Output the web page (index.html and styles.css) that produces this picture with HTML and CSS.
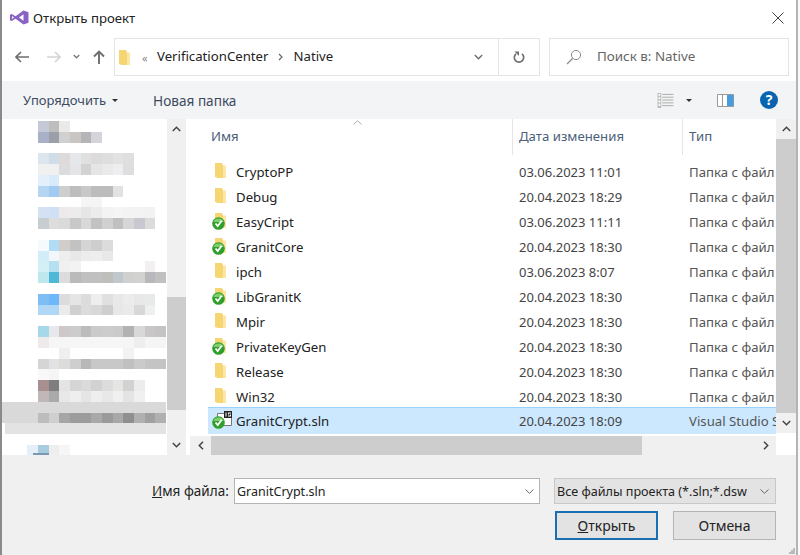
FILE: index.html
```html
<!DOCTYPE html>
<html lang="ru">
<head>
<meta charset="utf-8">
<title>Открыть проект</title>
<link rel="stylesheet" href="styles.css">
</head>
<body>
<div class="window">
  <header class="titlebar">
    <svg class="app-icon" width="19" height="15" viewBox="0 0 19 19" preserveAspectRatio="none"><path fill="#8a62c4" d="M13.5 0.5 18.5 2.7V16.3L13.5 18.5 5.5 11 1.8 14 0 13V6L1.8 5 5.5 8ZM13.5 5.5 9 9.5 13.5 13.5ZM2 7.5V11.5L4 9.5Z"/></svg>
    <span class="title">Открыть проект</span>
    <svg class="close" width="12" height="12" viewBox="0 0 12 12"><path d="M.5.5l11 11M11.5.5l-11 11" stroke="#444" fill="none"/></svg>
  </header>
  <nav class="navbar">
    <div class="nav-buttons">
      <svg width="15" height="12" viewBox="0 0 15 12"><path d="M1 6h13M6 1 1 6l5 5" fill="none" stroke="#6e6e6e" stroke-width="1.6"/></svg>
      <svg class="fwd" width="15" height="12" viewBox="0 0 15 12"><path d="M1 6h13M9 1l5 5-5 5" fill="none" stroke="#d4d4d4" stroke-width="1.6"/></svg>
      <svg class="drop" width="7" height="5" viewBox="0 0 7 5"><path d="M.7 1 3.5 3.8 6.3 1" fill="none" stroke="#7a7a7a" stroke-width="1.3"/></svg>
      <svg class="up" width="12" height="14" viewBox="0 0 12 14"><path d="M6 14V1.5M1 6.5l5-5 5 5" fill="none" stroke="#6e6e6e" stroke-width="1.9"/></svg>
    </div>
    <div class="address">
      <svg class="crumb-folder" width="11" height="15" viewBox="0 0 11 15"><path fill="#f5d673" d="M0 0h7l1 2v13H3l-3-1z"/><path fill="#fbe6a3" d="M8 2.500h3V15H8z"/></svg>
      <span class="chev-more">«</span>
      <span class="crumb">VerificationCenter</span>
      <svg class="crumb-sep" width="5" height="8" viewBox="0 0 5 8"><path d="M1 1l3 3-3 3" fill="none" stroke="#666" stroke-width="1.200"/></svg>
      <span class="crumb">Native</span>
      <svg class="addr-drop" width="9" height="6" viewBox="0 0 9 6"><path d="M.8 1 4.500 4.700 8.200 1" fill="none" stroke="#6e6e6e" stroke-width="1.500"/></svg>
      <div class="refresh">
        <svg width="12" height="13" viewBox="0 0 12 13"><path d="M3 2.800A4.700 4.700 0 1 0 9 2.800" fill="none" stroke="#707070" stroke-width="1.700"/><path fill="#707070" d="M1.500 .5H6V5z"/></svg>
      </div>
    </div>
    <div class="search">
      <svg width="16" height="16" viewBox="0 0 16 16"><circle cx="10" cy="6" r="4.600" fill="none" stroke="#8a8a8a"/><path d="M6.500 9.500 1 15" stroke="#8a8a8a" stroke-width="1.200"/></svg>
      <span>Поиск в: Native</span>
    </div>
  </nav>
  <div class="toolbar">
    <span class="tool">Упорядочить</span>
    <i class="caret"></i>
    <span class="tool new-folder">Новая папка</span>
    <svg class="view-icon" width="17" height="15" viewBox="0 0 17 16"><path fill="#bdbdbd" d="M0 0h4v16H0z"/><path fill="#fff" d="M1 1h2v2H1zM1 4.500h2v2H1zM1 8h2v2H1zM1 11.500h2v2H1z"/><path stroke="#a9a9a9" d="M5 1.500h12M5 4.500h12M5 7.500h12M5 10.500h12M5 13.500h12"/></svg>
    <i class="caret view-caret"></i>
    <svg class="pane-icon" width="17" height="13" viewBox="0 0 17 13"><path fill="#fff" stroke="#9a9a9a" d="M.5.500h16v12H.5z"/><path fill="#4a9ade" d="M10 1h6.500v11H10z"/><path stroke="#9a9a9a" d="M5.500 1v11"/></svg>
    <span class="help">?</span>
  </div>
  <div class="main">
    <aside class="tree">
      <svg class="mosaic" width="164" height="336" viewBox="0 0 164 336" shape-rendering="crispEdges">
        <g transform="translate(36 2) scale(10.667 10.8)">
          <rect x="0" y="0" width="1" height="1" fill="#c5c8d6"/><rect x="1" y="0" width="1" height="1" fill="#bdbdbd"/><rect x="2" y="0" width="1" height="1" fill="#eaeaea"/>
          <rect x="0" y="1" width="1" height="1" fill="#aab0c8"/><rect x="1" y="1" width="1" height="1" fill="#9b9fa8"/><rect x="2" y="1" width="1" height="1" fill="#d0d0d0"/><rect x="3" y="1" width="1" height="1" fill="#c8c5c3"/><rect x="4" y="1" width="1" height="1" fill="#b5b5b7"/><rect x="5" y="1" width="1" height="1" fill="#d3d5da"/>
          <rect x="0" y="3" width="1" height="1" fill="#dde6ee"/><rect x="1" y="3" width="1" height="1" fill="#cfdde9"/><rect x="2" y="3" width="1" height="1" fill="#dedad9"/><rect x="3" y="3" width="1" height="1" fill="#e5e8ea"/><rect x="4" y="3" width="1" height="1" fill="#e0e0e0"/><rect x="5" y="3" width="1" height="1" fill="#dcdada"/><rect x="6" y="3" width="1" height="1" fill="#dedede"/><rect x="7" y="3" width="1" height="1" fill="#e2e2e2"/><rect x="8" y="3" width="1" height="1" fill="#dfdfdf"/>
          <rect x="0" y="4" width="1" height="1" fill="#f0f0f0"/><rect x="1" y="4" width="1" height="1" fill="#f0f0f0"/><rect x="2" y="4" width="1" height="1" fill="#dcdcdc"/><rect x="3" y="4" width="1" height="1" fill="#e5e5e8"/><rect x="4" y="4" width="1" height="1" fill="#d2d2d2"/><rect x="5" y="4" width="1" height="1" fill="#e5e5e5"/><rect x="6" y="4" width="1" height="1" fill="#eaeaea"/><rect x="7" y="4" width="1" height="1" fill="#eeeef0"/><rect x="8" y="4" width="1" height="1" fill="#dedede"/>
          <rect x="0" y="5" width="1" height="1" fill="#e3f0fb"/><rect x="1" y="5" width="1" height="1" fill="#d9ebfb"/>
          <rect x="0" y="6" width="1" height="1" fill="#b5d6f3"/><rect x="1" y="6" width="1" height="1" fill="#a0ccf3"/><rect x="2" y="6" width="1" height="1" fill="#cecece"/><rect x="3" y="6" width="1" height="1" fill="#bdbdbd"/><rect x="4" y="6" width="1" height="1" fill="#c8c8c8"/><rect x="5" y="6" width="1" height="1" fill="#bcbcbc"/><rect x="6" y="6" width="1" height="1" fill="#bcbcbc"/><rect x="7" y="6" width="1" height="1" fill="#e2e2e2"/>
          <rect x="4" y="7" width="1" height="1" fill="#f5f5f5"/><rect x="5" y="7" width="1" height="1" fill="#f5f5f5"/>
          <rect x="0" y="8" width="1" height="1" fill="#d3e1f3"/><rect x="1" y="8" width="1" height="1" fill="#cfdff5"/><rect x="2" y="8" width="1" height="1" fill="#eeeaea"/><rect x="3" y="8" width="1" height="1" fill="#ececec"/><rect x="4" y="8" width="1" height="1" fill="#e6e6e6"/><rect x="5" y="8" width="1" height="1" fill="#ececee"/><rect x="6" y="8" width="1" height="1" fill="#f3f3f3"/><rect x="7" y="8" width="1" height="1" fill="#f5f5f5"/><rect x="8" y="8" width="1" height="1" fill="#f3f3f3"/><rect x="9" y="8" width="1" height="1" fill="#f3f3f3"/><rect x="10" y="8" width="1" height="1" fill="#f2f2f2"/>
          <rect x="0" y="9" width="1" height="1" fill="#c8cdcf"/><rect x="1" y="9" width="1" height="1" fill="#dddddd"/><rect x="2" y="9" width="1" height="1" fill="#dadada"/><rect x="3" y="9" width="1" height="1" fill="#c8c8c8"/><rect x="4" y="9" width="1" height="1" fill="#d8d8d8"/><rect x="5" y="9" width="1" height="1" fill="#c0c2c4"/><rect x="6" y="9" width="1" height="1" fill="#d0d0d0"/><rect x="7" y="9" width="1" height="1" fill="#c0c0c0"/><rect x="8" y="9" width="1" height="1" fill="#d6d6d6"/><rect x="9" y="9" width="1" height="1" fill="#c8c8d0"/><rect x="10" y="9" width="1" height="1" fill="#dcdcdc"/>
          <rect x="0" y="11" width="1" height="1" fill="#f5fafd"/><rect x="1" y="11" width="1" height="1" fill="#b2dcf5"/><rect x="2" y="11" width="1" height="1" fill="#d0cdcb"/><rect x="3" y="11" width="1" height="1" fill="#c2c2c2"/><rect x="4" y="11" width="1" height="1" fill="#d5d5d5"/><rect x="5" y="11" width="1" height="1" fill="#cecece"/><rect x="6" y="11" width="1" height="1" fill="#dcdcdc"/>
          <rect x="0" y="12" width="1" height="1" fill="#d3ecf9"/><rect x="1" y="12" width="1" height="1" fill="#f2f7fb"/><rect x="2" y="12" width="1" height="1" fill="#eeeeee"/><rect x="3" y="12" width="1" height="1" fill="#e8e8e8"/><rect x="4" y="12" width="1" height="1" fill="#ececec"/><rect x="5" y="12" width="1" height="1" fill="#eeeeee"/><rect x="6" y="12" width="1" height="1" fill="#e8e8e8"/>
          <rect x="0" y="13" width="1" height="1" fill="#d5eff6"/><rect x="1" y="13" width="1" height="1" fill="#b5e0f0"/><rect x="2" y="13" width="1" height="1" fill="#f0f0f0"/><rect x="3" y="13" width="1" height="1" fill="#f2f2f2"/><rect x="10" y="13" width="1" height="1" fill="#f2f0f0"/>
          <rect x="0" y="14" width="1" height="1" fill="#bfe8ee"/><rect x="1" y="14" width="1" height="1" fill="#4db8d8"/><rect x="2" y="14" width="1" height="1" fill="#dcdcdc"/><rect x="3" y="14" width="1" height="1" fill="#bababa"/><rect x="4" y="14" width="1" height="1" fill="#c0c0c0"/><rect x="5" y="14" width="1" height="1" fill="#c0c0c0"/><rect x="6" y="14" width="1" height="1" fill="#bebeba"/><rect x="7" y="14" width="1" height="1" fill="#c0c8cc"/><rect x="8" y="14" width="1" height="1" fill="#d0d0d0"/><rect x="9" y="14" width="1" height="1" fill="#d2d2d0"/><rect x="10" y="14" width="1" height="1" fill="#b8b8bc"/><rect x="11" y="14" width="1" height="1" fill="#c0c0c0"/>
          <rect x="0" y="16" width="1" height="1" fill="#7ebdf5"/><rect x="1" y="16" width="1" height="1" fill="#6cb8f8"/><rect x="2" y="16" width="1" height="1" fill="#dcdcdc"/><rect x="3" y="16" width="1" height="1" fill="#e5e5e5"/><rect x="4" y="16" width="1" height="1" fill="#dcdcdc"/><rect x="5" y="16" width="1" height="1" fill="#eeeeee"/><rect x="6" y="16" width="1" height="1" fill="#e0e0e0"/><rect x="7" y="16" width="1" height="1" fill="#e8e8e8"/><rect x="8" y="16" width="1" height="1" fill="#ececec"/><rect x="9" y="16" width="1" height="1" fill="#e8e8e8"/><rect x="10" y="16" width="1" height="1" fill="#e8eaea"/>
          <rect x="0" y="17" width="1" height="1" fill="#b0d8f6"/><rect x="1" y="17" width="1" height="1" fill="#b0d8f6"/><rect x="2" y="17" width="1" height="1" fill="#ebebeb"/><rect x="3" y="17" width="1" height="1" fill="#d0d0d0"/><rect x="4" y="17" width="1" height="1" fill="#dcdcdc"/><rect x="5" y="17" width="1" height="1" fill="#d8d8d8"/><rect x="6" y="17" width="1" height="1" fill="#cecece"/><rect x="7" y="17" width="1" height="1" fill="#e8e8e8"/><rect x="8" y="17" width="1" height="1" fill="#eaeaea"/><rect x="9" y="17" width="1" height="1" fill="#d8d8d8"/><rect x="10" y="17" width="1" height="1" fill="#eef0f0"/>
          <rect x="0" y="19" width="1" height="1" fill="#a5d8e8"/><rect x="1" y="19" width="1" height="1" fill="#e8e8ec"/><rect x="2" y="19" width="1" height="1" fill="#cfc8c8"/><rect x="3" y="19" width="1" height="1" fill="#cccccc"/><rect x="4" y="19" width="1" height="1" fill="#bcbcbc"/><rect x="5" y="19" width="1" height="1" fill="#cacaca"/><rect x="6" y="19" width="1" height="1" fill="#cccccc"/><rect x="7" y="19" width="1" height="1" fill="#cacaca"/><rect x="8" y="19" width="1" height="1" fill="#b2b2b2"/><rect x="9" y="19" width="1" height="1" fill="#d8d8d8"/><rect x="10" y="19" width="1" height="1" fill="#c8c6c6"/><rect x="11" y="19" width="1" height="1" fill="#c4c4c4"/>
          <rect x="0" y="20" width="1" height="1" fill="#eeeaec"/><rect x="1" y="20" width="9" height="1" fill="#f6f6f6"/><rect x="9" y="20" width="1" height="1" fill="#eeeeee"/><rect x="10" y="20" width="2" height="1" fill="#f5f5f5"/>
          <rect x="2" y="21" width="1" height="1" fill="#f0eeee"/><rect x="8" y="21" width="1" height="1" fill="#f2f2f2"/>
          <rect x="0" y="22" width="1" height="1" fill="#d5d5d5"/><rect x="1" y="22" width="1" height="1" fill="#e2e2e4"/><rect x="2" y="22" width="1" height="1" fill="#dedcda"/><rect x="3" y="22" width="1" height="1" fill="#cecece"/><rect x="4" y="22" width="1" height="1" fill="#b8b8b8"/><rect x="5" y="22" width="3" height="1" fill="#c8c8c8"/><rect x="8" y="22" width="1" height="1" fill="#c0c0c0"/><rect x="9" y="22" width="1" height="1" fill="#cacaca"/><rect x="10" y="22" width="2" height="1" fill="#c4c4c4"/>
          <rect x="0" y="23" width="1" height="1" fill="#f8f8f8"/><rect x="1" y="23" width="1" height="1" fill="#f5f5f5"/>
          <rect x="0" y="24" width="1" height="1" fill="#a89090"/><rect x="1" y="24" width="1" height="1" fill="#7e7e7e"/><rect x="2" y="24" width="1" height="1" fill="#e4e4e4"/><rect x="3" y="24" width="1" height="1" fill="#d5d5d5"/><rect x="4" y="24" width="1" height="1" fill="#dadada"/><rect x="5" y="24" width="1" height="1" fill="#d2d2d2"/><rect x="6" y="24" width="1" height="1" fill="#dcdcdc"/><rect x="7" y="24" width="1" height="1" fill="#e5e5e3"/><rect x="8" y="24" width="1" height="1" fill="#d2d2d2"/><rect x="9" y="24" width="1" height="1" fill="#ececec"/>
          <rect x="0" y="25" width="1" height="1" fill="#c0b8b8"/><rect x="1" y="25" width="1" height="1" fill="#aaaaaa"/><rect x="2" y="25" width="1" height="1" fill="#e8e8e8"/><rect x="3" y="25" width="1" height="1" fill="#eeeeee"/><rect x="4" y="25" width="1" height="1" fill="#e5e5e5"/><rect x="5" y="25" width="1" height="1" fill="#eeeeee"/><rect x="6" y="25" width="1" height="1" fill="#e8e8e8"/><rect x="7" y="25" width="1" height="1" fill="#f0f0f0"/><rect x="8" y="25" width="1" height="1" fill="#e4e4e4"/><rect x="9" y="25" width="1" height="1" fill="#f0f0f0"/>
          <rect x="-3.400" y="26" width="15.400" height="2" fill="#d9d9d9"/>
          <rect x="0" y="27" width="1" height="1" fill="#bdbdbd"/><rect x="1" y="27" width="1" height="1" fill="#cfcfcf"/><rect x="2" y="27" width="1" height="1" fill="#a6a6a6"/><rect x="3" y="27" width="1" height="1" fill="#9c9c9c"/><rect x="4" y="27" width="1" height="1" fill="#9c9c9c"/><rect x="5" y="27" width="1" height="1" fill="#a8a8a8"/><rect x="6" y="27" width="1" height="1" fill="#9a9a9a"/><rect x="7" y="27" width="1" height="1" fill="#a8a8a8"/><rect x="8" y="27" width="1" height="1" fill="#8f8f8f"/><rect x="9" y="27" width="1" height="1" fill="#b0b0b0"/><rect x="10" y="27" width="1" height="1" fill="#a0a0a0"/><rect x="11" y="27" width="1" height="1" fill="#b0b0b0"/>
          <rect x="-3.100" y="28" width="15.100" height="1" fill="#e3e3e3"/>
          <rect x="-1" y="30" width="1" height="1.200" fill="#e4eff8"/><rect x="0" y="30" width="1" height="1.200" fill="#a8cbe0"/><rect x="1" y="30" width="1" height="1.200" fill="#eeeeee"/><rect x="2" y="30" width="1" height="1.200" fill="#f6f6f6"/>
          <rect x="-.5" y="30.750" width="1.500" height=".2" fill="#7a98ae"/>
        </g>
      </svg>
    </aside>
    <div class="tree-scroll">
      <span class="arrow-btn"><svg width="9" height="6" viewBox="0 0 9 6"><path d="M.8 5 4.500 1.300 8.200 5" fill="none" stroke="#444" stroke-width="1.500"/></svg></span>
      <span class="track"><i class="thumb tree-thumb"></i></span>
      <span class="arrow-btn"><svg width="9" height="6" viewBox="0 0 9 6"><path d="M.8 1 4.500 4.700 8.200 1" fill="none" stroke="#444" stroke-width="1.500"/></svg></span>
    </div>
    <section class="files">
      <div class="file-area">
        <div class="head">
          <span class="col-name">Имя<svg class="sort" width="9" height="5" viewBox="0 0 9 5"><path d="M.5 4.500 4.500.7 8.500 4.500" fill="none" stroke="#aaa"/></svg></span>
          <span class="col-date">Дата изменения</span>
          <span class="col-type">Тип</span>
        </div>
        <div class="rows">
          <div class="row"><span class="ic"><svg class="folder" width="11" height="15" viewBox="0 0 11 15"><path fill="#f5d673" d="M0 0h7l1 2v13H3l-3-1z"/><path fill="#fbe6a3" d="M8 2.500h3V15H8z"/></svg></span><span class="name">CryptoPP</span><span class="date">03.06.2023 11:01</span><span class="type">Папка с файл</span></div>
          <div class="row"><span class="ic"><svg class="folder" width="11" height="15" viewBox="0 0 11 15"><path fill="#f5d673" d="M0 0h7l1 2v13H3l-3-1z"/><path fill="#fbe6a3" d="M8 2.500h3V15H8z"/></svg></span><span class="name">Debug</span><span class="date">20.04.2023 18:29</span><span class="type">Папка с файл</span></div>
          <div class="row ok"><span class="ic"><svg class="folder" width="11" height="15" viewBox="0 0 11 15"><path fill="#f5d673" d="M0 0h7l1 2v13H3l-3-1z"/><path fill="#fbe6a3" d="M8 2.500h3V15H8z"/></svg><svg class="badge" width="13" height="13" viewBox="0 0 13 13"><circle cx="6.500" cy="6.500" r="6.300" fill="#2f9e2c"/><path d="M1.500 5a5 3.600 0 0 1 10 0z" fill="#7fd06c"/><path d="M3.500 6.500 5.700 9 9.700 3.800" fill="none" stroke="#fff" stroke-width="1.800"/></svg></span><span class="name">EasyCript</span><span class="date">03.06.2023 11:11</span><span class="type">Папка с файл</span></div>
          <div class="row ok"><span class="ic"><svg class="folder" width="11" height="15" viewBox="0 0 11 15"><path fill="#f5d673" d="M0 0h7l1 2v13H3l-3-1z"/><path fill="#fbe6a3" d="M8 2.500h3V15H8z"/></svg><svg class="badge" width="13" height="13" viewBox="0 0 13 13"><circle cx="6.500" cy="6.500" r="6.300" fill="#2f9e2c"/><path d="M1.500 5a5 3.600 0 0 1 10 0z" fill="#7fd06c"/><path d="M3.500 6.500 5.700 9 9.700 3.800" fill="none" stroke="#fff" stroke-width="1.800"/></svg></span><span class="name">GranitCore</span><span class="date">20.04.2023 18:30</span><span class="type">Папка с файл</span></div>
          <div class="row"><span class="ic"><svg class="folder" width="11" height="15" viewBox="0 0 11 15"><path fill="#f5d673" d="M0 0h7l1 2v13H3l-3-1z"/><path fill="#fbe6a3" d="M8 2.500h3V15H8z"/></svg></span><span class="name">ipch</span><span class="date">03.06.2023 8:07</span><span class="type">Папка с файл</span></div>
          <div class="row ok"><span class="ic"><svg class="folder" width="11" height="15" viewBox="0 0 11 15"><path fill="#f5d673" d="M0 0h7l1 2v13H3l-3-1z"/><path fill="#fbe6a3" d="M8 2.500h3V15H8z"/></svg><svg class="badge" width="13" height="13" viewBox="0 0 13 13"><circle cx="6.500" cy="6.500" r="6.300" fill="#2f9e2c"/><path d="M1.500 5a5 3.600 0 0 1 10 0z" fill="#7fd06c"/><path d="M3.500 6.500 5.700 9 9.700 3.800" fill="none" stroke="#fff" stroke-width="1.800"/></svg></span><span class="name">LibGranitK</span><span class="date">20.04.2023 18:30</span><span class="type">Папка с файл</span></div>
          <div class="row"><span class="ic"><svg class="folder" width="11" height="15" viewBox="0 0 11 15"><path fill="#f5d673" d="M0 0h7l1 2v13H3l-3-1z"/><path fill="#fbe6a3" d="M8 2.500h3V15H8z"/></svg></span><span class="name">Mpir</span><span class="date">20.04.2023 18:30</span><span class="type">Папка с файл</span></div>
          <div class="row ok"><span class="ic"><svg class="folder" width="11" height="15" viewBox="0 0 11 15"><path fill="#f5d673" d="M0 0h7l1 2v13H3l-3-1z"/><path fill="#fbe6a3" d="M8 2.500h3V15H8z"/></svg><svg class="badge" width="13" height="13" viewBox="0 0 13 13"><circle cx="6.500" cy="6.500" r="6.300" fill="#2f9e2c"/><path d="M1.500 5a5 3.600 0 0 1 10 0z" fill="#7fd06c"/><path d="M3.500 6.500 5.700 9 9.700 3.800" fill="none" stroke="#fff" stroke-width="1.800"/></svg></span><span class="name">PrivateKeyGen</span><span class="date">20.04.2023 18:30</span><span class="type">Папка с файл</span></div>
          <div class="row"><span class="ic"><svg class="folder" width="11" height="15" viewBox="0 0 11 15"><path fill="#f5d673" d="M0 0h7l1 2v13H3l-3-1z"/><path fill="#fbe6a3" d="M8 2.500h3V15H8z"/></svg></span><span class="name">Release</span><span class="date">20.04.2023 18:30</span><span class="type">Папка с файл</span></div>
          <div class="row"><span class="ic"><svg class="folder" width="11" height="15" viewBox="0 0 11 15"><path fill="#f5d673" d="M0 0h7l1 2v13H3l-3-1z"/><path fill="#fbe6a3" d="M8 2.500h3V15H8z"/></svg></span><span class="name">Win32</span><span class="date">20.04.2023 18:30</span><span class="type">Папка с файл</span></div>
          <div class="row selected ok"><span class="ic"><svg class="doc" width="18" height="15" viewBox="0 0 18 15"><path fill="#fff" stroke="#777" d="M3.500 2.500h14v12h-14z"/><path fill="#222" d="M10 0h8v7h-8z"/><path fill="#fff" d="M11.500 1.500h1v4h-1zM14 1.500h3v1h-2v1h2v2h-3v-1h2v-1h-2z"/></svg><svg class="badge" width="13" height="13" viewBox="0 0 13 13"><circle cx="6.500" cy="6.500" r="6.300" fill="#2f9e2c"/><path d="M1.500 5a5 3.600 0 0 1 10 0z" fill="#7fd06c"/><path d="M3.500 6.500 5.700 9 9.700 3.800" fill="none" stroke="#fff" stroke-width="1.800"/></svg></span><span class="name">GranitCrypt.sln</span><span class="date">20.04.2023 18:09</span><span class="type">Visual Studio S</span></div>
        </div>
        <div class="hscroll">
          <span class="arrow-btn h"><svg width="6" height="9" viewBox="0 0 6 9"><path d="M5 .8 1.300 4.500 5 8.200" fill="none" stroke="#444" stroke-width="1.500"/></svg></span>
          <span class="htrack"><i class="thumb h-thumb"></i></span>
          <span class="arrow-btn h"><svg width="6" height="9" viewBox="0 0 6 9"><path d="M1 .8 4.700 4.500 1 8.200" fill="none" stroke="#444" stroke-width="1.500"/></svg></span>
        </div>
      </div>
      <div class="file-scroll">
        <span class="arrow-btn"><svg width="9" height="6" viewBox="0 0 9 6"><path d="M.8 5 4.500 1.300 8.200 5" fill="none" stroke="#444" stroke-width="1.500"/></svg></span>
        <span class="track filled"></span>
        <span class="arrow-btn"><svg width="9" height="6" viewBox="0 0 9 6"><path d="M.8 1 4.500 4.700 8.200 1" fill="none" stroke="#444" stroke-width="1.500"/></svg></span>
        <span class="corner"></span>
      </div>
    </section>
  </div>
  <footer class="footer">
    <div class="line">
      <label class="fname-label"><u>И</u>мя файла:</label>
      <div class="input"><span>GranitCrypt.sln</span><svg width="9" height="5" viewBox="0 0 9 5"><path d="M.5.500 4.500 4.300 8.500.500" fill="none" stroke="#666"/></svg></div>
      <div class="filter"><span>Все файлы проекта (*.sln;*.dsw</span><svg width="9" height="5" viewBox="0 0 9 5"><path d="M.5.500 4.500 4.300 8.500.500" fill="none" stroke="#666"/></svg></div>
    </div>
    <div class="buttons">
      <button class="btn primary"><u>О</u>ткрыть</button>
      <button class="btn">Отмена</button>
    </div>
    <svg class="grip" width="6" height="6" viewBox="0 0 6 6"><path fill="#bbb" d="M4 0h2v2H4zM2 2h2v2H2zM4 2h2v2H4zM0 4h2v2H0zM2 4h2v2H2zM4 4h2v2H4z"/></svg>
  </footer>
</div>
</body>
</html>
```
FILE: styles.css
```css
* { box-sizing: border-box; }
html, body { margin: 0; padding: 0; }
body { width: 800px; height: 555px; overflow: hidden; background: #fbfbfb; font-family: "Noto Sans", "Open Sans", sans-serif; font-size: 13.2px; color: #222; }
.window { position: relative; width: 798px; height: 555px; display: flex; flex-direction: column; border-left: 2px solid #8a8a8a; border-right: 2px solid #b4b4b4; background: #fff; }
.titlebar { height: 38px; display: flex; align-items: center; padding: 0 12px 3px 8px; flex: none; }
.app-icon { margin-right: 4px; }
.title { font-size: 13.2px; color: #222; flex: 1; }
.navbar { height: 43px; flex: none; display: flex; padding: 0 0 5px 0; }
.nav-buttons { width: 112px; display: flex; align-items: center; padding-left: 13px; padding-bottom: 1px; }
.fwd { margin-left: 16px; }
.drop { margin-left: 12px; }
.up { margin-left: 13px; }
.address { width: 426px; display: flex; align-items: center; border: 1px solid #e4e4e4; padding-left: 4px; padding-bottom: 0; }
.chev-more { margin-left: 12px; color: #888; font-size: 11px; width: 15px; }
.crumb { color: #222; position: relative; top: -1px; }
.crumb-sep { margin: 0 10px 0 10px; }
.addr-drop { margin-left: auto; margin-right: 15px; }
.refresh { width: 41px; height: 100%; display: flex; align-items: center; justify-content: center; border-left: 1px solid #e4e4e4; }
.search { margin-left: 9px; width: 240px; display: flex; align-items: center; gap: 15px; padding-left: 16px; border: 1px solid #e4e4e4; color: #666; font-size: 13.4px; }
.search span { position: relative; top: -1px; }
.toolbar { height: 38px; flex: none; background: #f3f4f6; display: flex; align-items: center; padding-left: 21px; color: #3c4a5e; }
.tool { font-size: 13px; }
.caret { width: 0; height: 0; border: 3px solid transparent; border-top: 3px solid #333; border-bottom: 0; margin-left: 6px; }
.new-folder { margin-left: 35px; font-size: 13.6px; }
.view-icon { margin-left: auto; }
.view-caret { margin-left: 12px; }
.pane-icon { margin-left: 25px; }
.help { width: 18px; height: 18px; border-radius: 50%; background: #0a64b0; color: #fff; font-weight: 700; font-size: 14px; line-height: 18px; text-align: center; margin: 0 18px 0 26px; }
.main { height: 336px; flex: none; display: flex; }
.tree { width: 164px; flex: none; }
.mosaic { display: block; }
.tree-scroll { width: 19px; flex: none; display: flex; flex-direction: column; background: #f0f0f0; margin-left: 1px; }
.arrow-btn { height: 20px; flex: none; display: flex; align-items: center; justify-content: center; }
.track { flex: 1; display: block; padding-top: 158px; padding-bottom: 25px; }
.thumb { display: block; background: #cdcdcd; }
.tree-thumb { height: 100%; }
.files { flex: 1; display: flex; min-width: 0; margin-left: 4px; }
.file-area { width: 586px; flex: none; display: flex; flex-direction: column; }
.head { height: 36px; flex: none; display: flex; align-items: center; color: #4c607a; }
.head span { height: 100%; display: flex; align-items: center; position: relative; padding-bottom: 3px; }
.col-name { width: 323px; padding-left: 21px; border-right: 1px solid #e5e5e5; }
.col-date { width: 170px; padding-left: 6px; border-right: 1px solid #e5e5e5; }
.col-type { flex: 1; padding-left: 6px; }
.sort { position: absolute; left: 163px; top: 1px; }
.rows { flex: 1; padding-top: 4px; min-height: 0; }
.row { height: 25px; display: flex; align-items: center; overflow: hidden; white-space: nowrap; }
.ic { width: 46px; flex: none; position: relative; height: 100%; display: block; }
.folder { position: absolute; left: 25px; top: 4px; }
.doc { position: absolute; left: 23px; top: 5px; }
.badge { position: absolute; left: 22px; top: 8px; }
.name { width: 283px; flex: none; color: #222; }
.date { width: 170px; flex: none; color: #444; font-size: 13px; }
.type { color: #555; }
.selected { height: 27px; margin-top: -2px; background: #cce8ff; border-top: 1px solid #99d1ff; margin-left: 18px; }
.selected .ic { width: 28px; margin-left: 0; }
.selected .doc { left: 6px; top: 3px; }
.selected .badge { left: 4px; top: 8px; }
.hscroll { height: 19px; flex: none; display: flex; background: #f0f0f0; }
.arrow-btn.h { width: 21px; height: 19px; }
.htrack { flex: 1; display: block; }
.h-thumb { width: 431px; height: 100%; }
.file-scroll { width: 20px; flex: none; display: flex; flex-direction: column; background: #f0f0f0; }
.track.filled { padding: 0; background: #cdcdcd; }
.corner { height: 22px; flex: none; background: #fff; }
.footer { flex: 1; background: #f0f0f0; position: relative; padding: 23px 20px 0 150px; }
.line { display: flex; align-items: center; height: 26px; }
.fname-label { width: 82px; color: #222; font-size: 13.5px; }
.input { width: 306px; height: 26px; background: #fff; border: 1px solid #b4b4b4; display: flex; align-items: center; justify-content: space-between; padding: 0 5px 0 2px; font-size: 12.5px; }
.filter { margin-left: 14px; width: 222px; height: 26px; background: #e3e3e3; border: 1px solid #c8c8c8; display: flex; align-items: center; justify-content: space-between; padding: 0 6px 0 2px; white-space: nowrap; overflow: hidden; font-size: 12.6px; }
.buttons { display: flex; justify-content: flex-end; gap: 15px; margin-top: 7px; }
.btn { width: 103px; height: 29px; background: #e3e3e3; border: 1px solid #b4b4b4; font-family: inherit; font-size: 14px; color: #222; padding: 0 0 0 0; }
.btn.primary { border: 2px solid #1b6fb0; }
.grip { position: absolute; right: 1px; bottom: 1px; }
```
